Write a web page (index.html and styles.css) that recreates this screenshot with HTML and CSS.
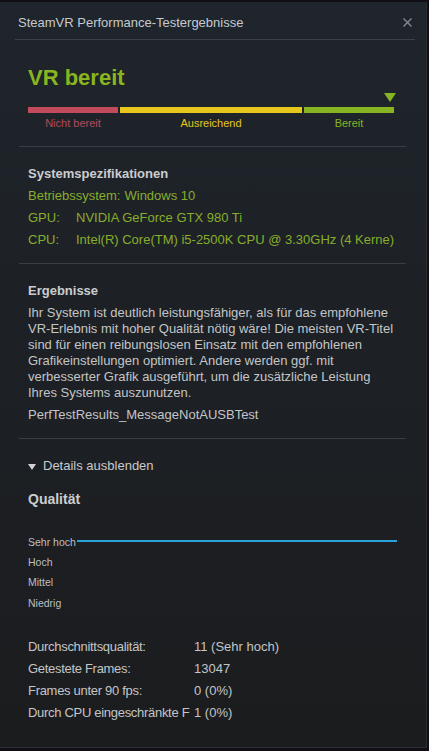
FILE: index.html
```html
<!DOCTYPE html>
<html lang="de">
<head>
<meta charset="utf-8">
<title>SteamVR Performance-Testergebnisse</title>
<link rel="stylesheet" href="styles.css">
</head>
<body>
<div class="dialog">
  <div class="titlebar">
    <span class="title">SteamVR Performance-Testergebnisse</span>
    <svg class="close" width="9" height="9" viewBox="0 0 9 9"><path d="M0.5 0.5 L8.5 8.5 M8.5 0.5 L0.5 8.5" stroke="#878c92" stroke-width="1.3" fill="none"/></svg>
  </div>
  <div class="rule rule-title"></div>

  <div class="content">
    <section class="status">
      <h1 class="headline">VR bereit</h1>
      <div class="marker-row"><span class="marker"></span></div>
      <div class="meter">
        <div class="seg seg-red"></div>
        <div class="seg seg-yellow"></div>
        <div class="seg seg-green"></div>
      </div>
      <div class="meter-labels">
        <span class="lbl lbl-red">Nicht bereit</span>
        <span class="lbl lbl-yellow">Ausreichend</span>
        <span class="lbl lbl-green">Bereit</span>
      </div>
    </section>
    <div class="rule rule-status"></div>

    <section class="specs">
      <h2 class="heading">Systemspezifikationen</h2>
      <div class="spec-row"><span>Betriebssystem:</span><span class="spec-os">Windows 10</span></div>
      <div class="spec-row"><span class="spec-key">GPU:</span><span>NVIDIA GeForce GTX 980 Ti</span></div>
      <div class="spec-row"><span class="spec-key">CPU:</span><span>Intel(R) Core(TM) i5-2500K CPU @ 3.30GHz (4 Kerne)</span></div>
    </section>
    <div class="rule rule-specs"></div>

    <section class="results">
      <h2 class="heading">Ergebnisse</h2>
      <p class="para">Ihr System ist deutlich leistungsfähiger, als für das empfohlene<br>VR-Erlebnis mit hoher Qualität nötig wäre! Die meisten VR-Titel<br>sind für einen reibungslosen Einsatz mit den empfohlenen<br>Grafikeinstellungen optimiert. Andere werden ggf. mit<br>verbesserter Grafik ausgeführt, um die zusätzliche Leistung<br>Ihres Systems auszunutzen.</p>
      <p class="msg">PerfTestResults_MessageNotAUSBTest</p>
    </section>
    <div class="rule rule-results"></div>

    <section class="details">
      <div class="toggle"><span class="caret"></span>Details ausblenden</div>
      <h2 class="heading heading-q">Qualität</h2>
      <div class="chart">
        <div class="chart-row"><span class="chart-lbl">Sehr hoch</span><span class="plot-line"></span></div>
        <div class="chart-row"><span class="chart-lbl">Hoch</span></div>
        <div class="chart-row"><span class="chart-lbl">Mittel</span></div>
        <div class="chart-row"><span class="chart-lbl">Niedrig</span></div>
      </div>
      <div class="stats">
        <div class="stat"><span class="stat-key">Durchschnittsqualität:</span><span>11 (Sehr hoch)</span></div>
        <div class="stat"><span class="stat-key">Getestete Frames:</span><span>13047</span></div>
        <div class="stat"><span class="stat-key">Frames unter 90 fps:</span><span>0 (0%)</span></div>
        <div class="stat"><span class="stat-key">Durch CPU eingeschränkte F</span><span>1 (0%)</span></div>
      </div>
    </section>
  </div>
</div>
</body>
</html>
```
FILE: styles.css
```css
* { box-sizing: border-box; }
html, body { margin: 0; padding: 0; }
body {
  background: #110f15;
  width: 429px;
  height: 751px;
  overflow: hidden;
  font-family: "Liberation Sans", Arial, sans-serif;
  color: #c3c6c9;
}
.dialog {
  margin-top: 2px;
  width: 427px;
  height: 746px;
  background: linear-gradient(to bottom, #1f252c 0%, #1d2126 40%, #1b1c1e 100%);
  border-right: 1px solid #2b2e33;
  border-bottom: 1px solid #2b2e33;
}
.titlebar {
  display: flex;
  align-items: center;
  justify-content: space-between;
  height: 37px;
  padding: 4px 14px 0 18px;
}
.title {
  font-size: 13px;
  line-height: 33px;
  color: #c5cace;
}
.close { margin-top: 0; }
.rule { height: 1px; background: #3a3e44; }
.rule-title { margin: 0 11px 0 15px; background: #3b4047; }
.content { margin: 0 20px 0 19px; }
.content .rule { margin: 0; }

.status { padding: 25px 9px 0 9px; }
.headline {
  margin: 0;
  font-size: 22px;
  font-weight: bold;
  line-height: 26px;
  color: #88b520;
}
.marker-row {
  display: flex;
  justify-content: flex-end;
  height: 9px;
  margin-top: 2px;
  padding-right: 1px;
}
.marker {
  width: 0; height: 0;
  border-left: 6px solid transparent;
  border-right: 6px solid transparent;
  border-top: 9px solid #87b420;
}
.meter {
  display: grid;
  grid-template-columns: 90px 1fr 90px;
  gap: 2px;
  height: 6px;
  margin: 5px 3px 0 0;
}
.seg-red { background: #c24a5d; }
.seg-yellow { background: #e7c71b; }
.seg-green { background: #87b420; }
.meter-labels {
  display: grid;
  grid-template-columns: 90px 1fr 90px;
  gap: 2px;
  margin: 3px 3px 0 0;
  font-size: 11px;
  line-height: 14px;
  text-align: center;
}
.lbl-red { color: #b24a5c; }
.lbl-yellow { color: #e6c61f; }
.lbl-green { color: #88b224; }
.rule-status { margin-top: 16px !important; }

.heading {
  margin: 0;
  font-size: 13px;
  font-weight: bold;
  line-height: 16px;
  color: #cbcdcf;
}
.specs { padding: 19px 9px 0 9px; }
.spec-row {
  display: flex;
  font-size: 13px;
  line-height: 22px;
  color: #88ad2b;
}
.spec-row:first-of-type { margin-top: 3px; }
.spec-key { width: 48px; flex: none; }
.spec-os { margin-left: 4px; }
.rule-specs { margin-top: 12px !important; }

.results { padding: 19px 9px 0 9px; }
.para {
  margin: 6px 0 0;
  font-size: 13px;
  line-height: 16px;
  color: #c3c5c7;
}
.msg {
  margin: 6px 0 0;
  font-size: 13px;
  line-height: 16px;
  color: #c3c5c7;
}
.rule-results { margin-top: 15px !important; }

.details { padding: 19px 9px 0 9px; }
.toggle {
  display: flex;
  align-items: center;
  font-size: 13px;
  line-height: 16px;
  color: #c8cacc;
}
.caret {
  width: 0; height: 0;
  border-left: 4px solid transparent;
  border-right: 4px solid transparent;
  border-top: 6px solid #d0d2d4;
  margin: 1px 7px 0 0;
}
.heading-q {
  margin-top: 17px;
  font-size: 14px;
  line-height: 17px;
}
.chart { margin-top: 24px; }
.chart-row {
  display: flex;
  align-items: center;
  height: 20.2px;
  font-size: 10.5px;
  line-height: 20px;
  color: #bcbfc2;
}
.chart-lbl { flex: none; }
.plot-line {
  flex: 1;
  height: 2px;
  margin: -2px 0 0 1px;
  background: #2aa2dc;
}
.stats { margin-top: 23px; }
.stat {
  display: flex;
  font-size: 13px;
  line-height: 22px;
  color: #c3c5c7;
}
.stat-key {
  width: 166px;
  flex: none;
  white-space: nowrap;
  letter-spacing: -0.3px;
}
```
